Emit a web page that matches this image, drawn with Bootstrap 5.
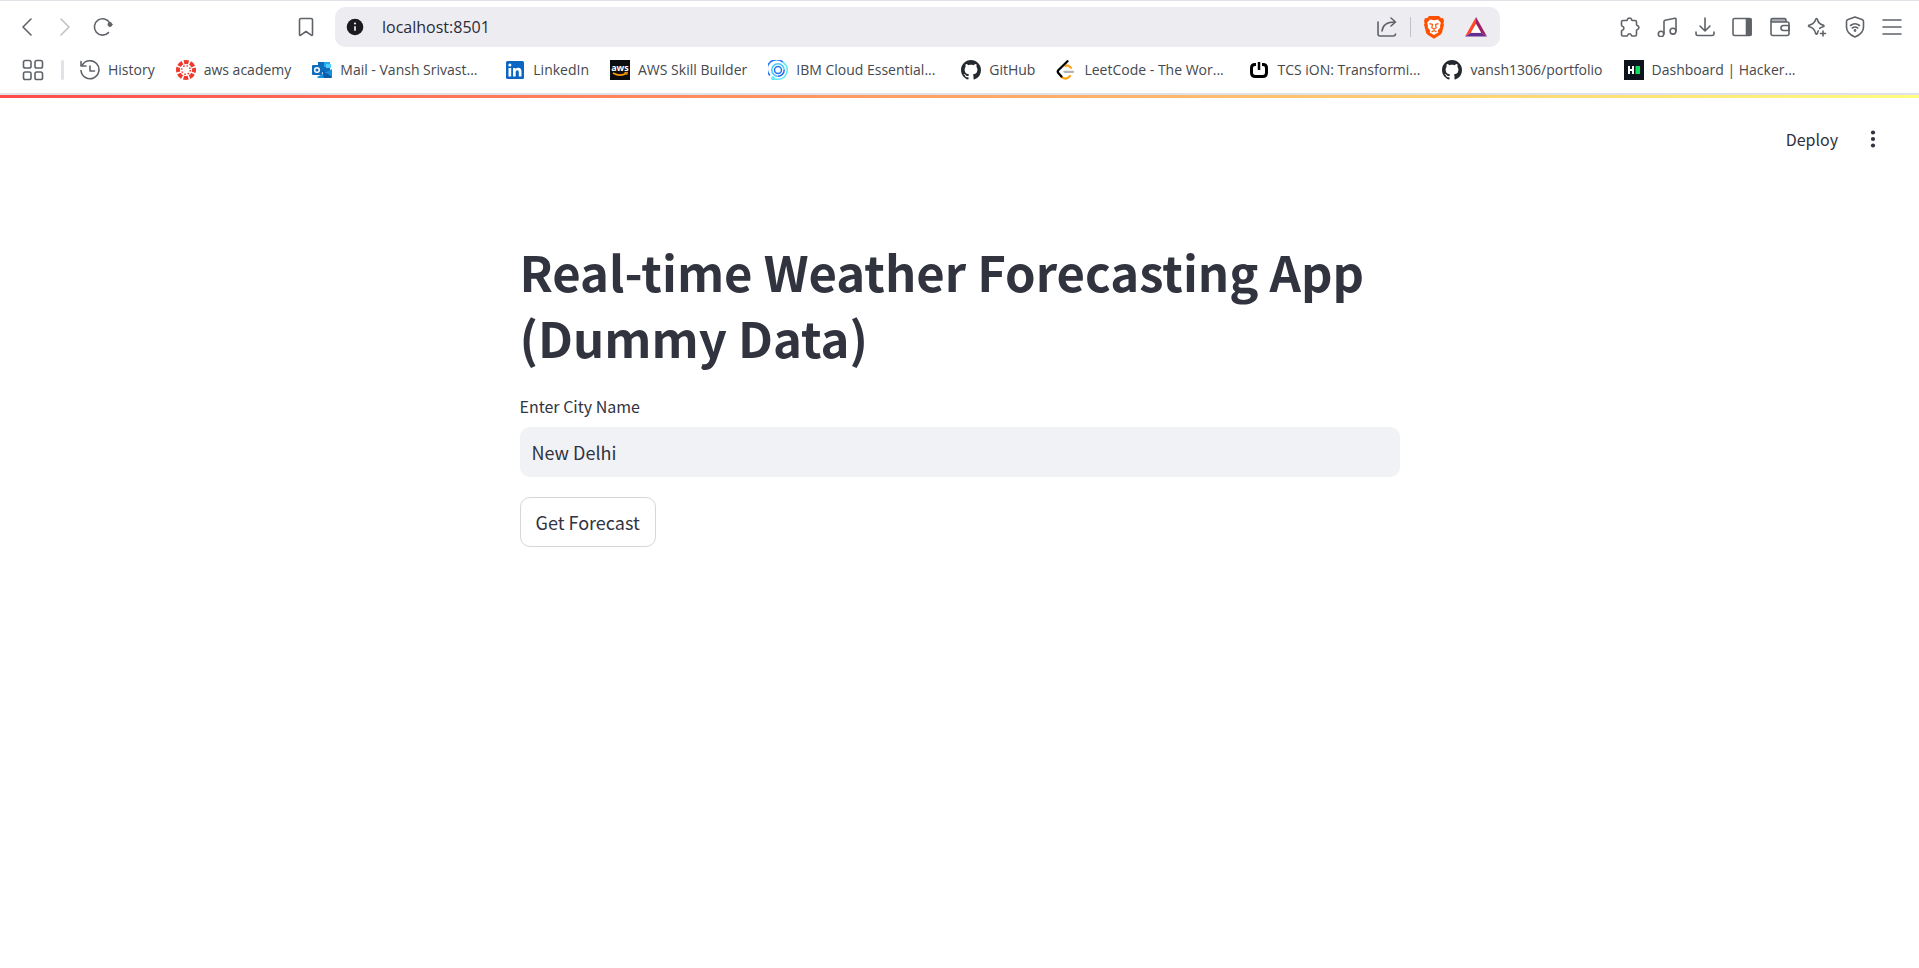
<!DOCTYPE html>
<html lang="en">
<head>
<meta charset="utf-8">
<meta name="viewport" content="width=device-width, initial-scale=1">
<title>Real-time Weather Forecasting App</title>
<link href="https://cdn.jsdelivr.net/npm/bootstrap@5.3.0/dist/css/bootstrap.min.css" rel="stylesheet">
<style>
  body { background: #fff; color: #31333f; font-family: "Noto Sans CJK SC", sans-serif; }
  svg { display: block; flex: none; }

  /* Browser chrome */
  .chrome { border-top: 1px solid #e1e1e8; border-bottom: 2px solid #e1e1e8; font-family: "Open Sans", sans-serif; color: #3b3e42; }
  .tool-row { height: 50px; padding-top: 1px; }
  .tool-left { width: 335px; padding-left: 8px; padding-right: 10px; }
  .tool-right { width: 419px; padding-right: 8px; }
  .tool-grid { display: grid; grid-template-columns: repeat(8, 1fr); width: 300px; }
  .icon-btn { width: 38px; height: 38px; padding: 0; border: 0; color: #5f6368; display: flex; align-items: center; justify-content: center; }
  .tool-grid .icon-btn { width: 100%; }
  .line-icon { fill: none; stroke: currentColor; stroke-width: 1.6; stroke-linecap: round; stroke-linejoin: round; }
  .address { height: 40px; background: #edecf1; border-radius: 10px; padding-left: 11px; padding-right: 5px; }
  .address input { border: 0; outline: 0; background: transparent; color: #2a2b38; font-size: 16px; padding: 0 0 0 18px; }
  .address-rule { width: 1px; height: 20px; background: #bfc3c9; }
  .mark-row { height: 42px; padding-left: 22px; padding-bottom: 4px; font-size: 14px; line-height: 20px; gap: 21px; }
  .mark-row a { color: #45484d; text-decoration: none; display: flex; align-items: center; gap: 8px; white-space: nowrap; }
  .mark-cut { width: 144px; }
  .mark-rule { width: 3px; height: 20px; border-radius: 2px; background: #e1e1e8; margin: 0 -5px 0 -4px; }

  /* Streamlit page */
  .decoration { height: 3px; background: linear-gradient(90deg, #ff4b4b, #fffd80); }
  .app-header { height: 82px; padding-right: 27px; gap: 16px; }
  .app-header button { color: #31333f; font-size: 16px; line-height: 24px; padding: 0; border: 0; }
  .app-body { max-width: 880px; padding-top: 58px; }
  .app-title { font-size: 49px; line-height: 66px; font-weight: 700; margin: 0 0 24px; color: #31333f; }
  .field-label { font-size: 16px; line-height: 24px; margin-bottom: 9px; }
  .city-input, .city-input:focus { height: 50px; background: #f0f2f6; border: 0; border-radius: 10px; padding: 0 12px; font-size: 18px; color: #31333f; }
  .forecast-btn { height: 50px; border: 1px solid #d6d6d9; border-radius: 10px; padding: 0 15px; font-size: 18px; color: #31333f; background: #fff; margin-top: 20px; }
</style>
</head>
<body>
<svg width="0" height="0" class="position-absolute" aria-hidden="true">
  <symbol id="octocat" viewBox="0 0 16 16"><path fill="#24292f" d="M8 0C3.58 0 0 3.58 0 8c0 3.54 2.29 6.53 5.47 7.59.4.07.55-.17.55-.38 0-.19-.01-.82-.01-1.49-2.01.37-2.53-.49-2.69-.94-.09-.23-.48-.94-.82-1.13-.28-.15-.68-.52-.01-.53.63-.01 1.08.58 1.23.82.72 1.21 1.87.87 2.33.66.07-.52.28-.87.51-1.07-1.78-.2-3.64-.89-3.64-3.95 0-.87.31-1.59.82-2.15-.08-.2-.36-1.02.08-2.12 0 0 .67-.21 2.2.82.64-.18 1.32-.27 2-.27s1.36.09 2 .27c1.53-1.04 2.2-.82 2.2-.82.44 1.1.16 1.92.08 2.12.51.56.82 1.27.82 2.15 0 3.07-1.87 3.75-3.65 3.95.29.25.54.73.54 1.48 0 1.07-.01 1.93-.01 2.2 0 .21.15.46.55.38A8.01 8.01 0 0 0 16 8c0-4.42-3.58-8-8-8z"/></symbol>
</svg>

<header class="chrome">
  <div class="tool-row d-flex align-items-center">
    <div class="tool-left d-flex align-items-center">
      <button class="btn icon-btn" aria-label="Back"><svg width="20" height="20" viewBox="0 0 20 20" class="line-icon"><path d="M14 2 6 10l8 8"/></svg></button>
      <button class="btn icon-btn" aria-label="Forward"><svg width="20" height="20" viewBox="0 0 20 20" class="line-icon" stroke-opacity=".4"><path d="m6 2 8 8-8 8"/></svg></button>
      <button class="btn icon-btn" aria-label="Reload"><svg width="20" height="20" viewBox="0 0 20 20" class="line-icon"><path d="M15.500 15.600A8.200 8.200 0 1 1 16.800 6"/><circle cx="17" cy="7.500" r="2" fill="currentColor" stroke-width="1"/></svg></button>
      <button class="btn icon-btn ms-auto" aria-label="Bookmark this page"><svg width="20" height="20" viewBox="0 0 20 20" class="line-icon"><path d="M5 1.500h10a1.500 1.500 0 0 1 1.500 1.500v14.500q0 1.500-1.200.6L10 14.500l-5.300 3.600q-1.200.9-1.200-.6V3A1.500 1.500 0 0 1 5 1.500Z"/></svg></button>
    </div>
    <div class="address d-flex align-items-center flex-grow-1">
      <svg width="18" height="18" viewBox="0 0 18 18"><circle cx="9" cy="9" r="8.300" fill="#1b1b1f"/><path d="M9 8.300v4.500" stroke="#edecf1" stroke-width="1.700"/><circle cx="9" cy="5.500" r="1.100" fill="#edecf1"/></svg>
      <input type="text" class="flex-grow-1" value="localhost:8501" aria-label="Address">
      <button class="btn icon-btn" aria-label="Share"><svg width="22" height="22" viewBox="0 0 22 22" class="line-icon"><path d="M2 6v12q0 2 2 2h13q2.500 0 2.500-2M6 15q1-9 13-9M15 2l4.500 4-4.500 4"/></svg></button>
      <span class="address-rule mx-1"></span>
      <button class="btn icon-btn" aria-label="Brave Shields"><svg width="22" height="24" viewBox="0 0 22 24"><path fill="#ff5000" d="M6 1h10l2 2.200 2-.2 1 3-.6 2.500.6 1-2 8q-.5 1.500-1.700 2.300L11 23.700l-6.300-3.900Q3.500 19 3 17.500L1 9.500l.6-1L1 6l1-3 2 .2z"/><path fill="#fff" d="m7 4.500 4 .8 4-.8 2.800 3.300-.8 3.200.3 1.500-2.600 3 .6 2L11 20l-4.300-2.500.6-2-2.600-3L5 11l-.8-3.200z"/><path fill="none" stroke="#ff5000" stroke-width="1.100" d="m6.500 8.600 3 .8-.7 3.400 2.200 1.400 2.200-1.400-.7-3.400 3-.8M11 14v2M8.500 17l2.500-1.500 2.500 1.500"/></svg></button>
      <button class="btn icon-btn ms-1" aria-label="Brave Rewards"><svg width="22" height="22" viewBox="0 0 22 22"><path fill="#ff4724" d="M11 1 0 20.500l6-3.800L11 8z"/><path fill="#9e1f63" d="m11 1 11 19.500-6-3.800L11 8z"/><path fill="#662d91" d="M0 20.500h22l-6-3.800H6z"/><path fill="#fff" d="m11 8-5 8.700h10z"/></svg></button>
    </div>
    <div class="tool-right d-flex justify-content-end">
      <div class="tool-grid">
        <button class="btn icon-btn" aria-label="Extensions"><svg width="20" height="20" viewBox="0 0 20 20" class="line-icon"><path d="M3 3.500h3.500c.6 0 .8-.4.900-1 .5-2 3.700-2 4.200 0 .1.600.4 1 .9 1H15a1.500 1.500 0 0 1 1.500 1.500v2.500c0 .6.3.9.9 1.100 2 .5 2 3.300 0 3.900-.6.200-.9.500-.9 1.100v3.900A1.500 1.500 0 0 1 15 19h-2.800c-.5 0-.8-.4-.9-.9-.5-1.800-3.100-1.800-3.600 0-.1.500-.4.900-.9.900H3a1.500 1.500 0 0 1-1.500-1.500v-3.300c0-.6.3-.8.900-1 2-.6 2-3.400 0-4-.6-.2-.9-.4-.9-1V5A1.500 1.500 0 0 1 3 3.500Z"/></svg></button>
        <button class="btn icon-btn" aria-label="Playlist"><svg width="20" height="20" viewBox="0 0 20 20" class="line-icon"><path d="M7 17V4.500q0-1 1-1.200l10-2q1-.2 1 .8V14"/><circle cx="4" cy="17" r="2.700"/><circle cx="16" cy="14.200" r="2.900"/></svg></button>
        <button class="btn icon-btn" aria-label="Downloads"><svg width="20" height="20" viewBox="0 0 20 20" class="line-icon"><path d="M10 1v13m-5-5 5 5 5-5M1 15v1.500Q1 18.500 3 18.500h14q2 0 2-2V15"/></svg></button>
        <button class="btn icon-btn" aria-label="Sidebar"><svg width="20" height="20" viewBox="0 0 20 20" class="line-icon"><rect x="1" y="1.500" width="18" height="17" rx="1.500"/><path fill="currentColor" d="M14.500 2H19v16h-4.500z"/></svg></button>
        <button class="btn icon-btn" aria-label="Wallet"><svg width="20" height="20" viewBox="0 0 20 20" class="line-icon"><path fill="#adb0b5" stroke="none" d="M2 2h13.500v3H2z"/><path d="M16 5V3q0-1.500-1.500-1.500h-12Q1 1.500 1 3v13.500Q1 18.500 3 18.500h14q2 0 2-2v-10Q19 5 17.500 5H3Q1 5 1 3.500"/><path d="M19 8.500h-5.500q-2.500 0-2.500 2.500t2.500 2.500H19z"/></svg></button>
        <button class="btn icon-btn" aria-label="Leo AI"><svg width="20" height="20" viewBox="0 0 20 20" class="line-icon"><path d="M9.500 1.500q.7 0 .9 1 1 4.500 5.600 5.600 2 .9 0 1.700-2 .5-3.300 1.600M1.500 8.900q0-.6 1-.8 5-1.400 6.100-5.600.2-1 .9-1M1.500 8.900q0 .6 1 .9 4.900 1.200 6.100 6.500.9 2 1.800 0 .3-1.400.9-2.400"/><path d="M16 14v5m-2.500-2.500h5"/></svg></button>
        <button class="btn icon-btn" aria-label="VPN"><svg width="20" height="22" viewBox="0 0 20 22" class="line-icon"><path d="m10 1 7 2.500q1.500.5 1.500 2V11q0 6.500-8.500 10Q1.500 17.500 1.500 11V5.500q0-1.500 1.500-2z"/><path d="M5.500 9.500q4.500-3.500 9 0M7.300 12q2.700-2 5.400 0"/><circle cx="10" cy="14.500" r=".6"/></svg></button>
        <button class="btn icon-btn" aria-label="Menu"><svg width="20" height="20" viewBox="0 0 20 20" class="line-icon"><path d="M1 3h18M1 10h18M1 17h18"/></svg></button>
      </div>
    </div>
  </div>

  <nav class="mark-row d-flex align-items-center" aria-label="Bookmarks">
    <a href="#" aria-label="All bookmarks"><svg width="22" height="22" viewBox="0 0 22 22" class="line-icon" color="#5f6368"><rect x="1.500" y="1.500" width="7.500" height="7.500" rx="1.800"/><rect x="13" y="1.500" width="7.500" height="7.500" rx="1.800"/><rect x="1.500" y="13" width="7.500" height="7.500" rx="1.800"/><rect x="13" y="13" width="7.500" height="7.500" rx="1.800"/></svg></a>
    <span class="mark-rule"></span>
    <a href="#"><svg width="20" height="20" viewBox="0 0 20 20" class="line-icon" color="#5f6368"><path d="M1 1.500V6h5M2 5.500A9 9 0 1 1 1 10.500M10 6v5h4.500"/></svg><span>History</span></a>
    <a href="#"><svg width="20" height="20" viewBox="0 0 20 20"><circle cx="10" cy="10" r="8" fill="none" stroke="#ee3a2c" stroke-width="4" stroke-dasharray="4.700 1.583" stroke-dashoffset="2.300"/><circle cx="10" cy="10" r="4.300" fill="none" stroke="#ee3a2c" stroke-width="1.500" stroke-dasharray="1.500 1.877"/></svg><span>aws academy</span></a>
    <a href="#"><svg width="20" height="20" viewBox="0 0 20 20"><path fill="#0f6cbd" d="M6 2h12v10H6z"/><path fill="#28a8ea" d="M12 2h6v5h-6z"/><path fill="#50d0ff" d="M14 4h5v4h-5z"/><path fill="#1490df" d="m5 17 15-8v7.500q0 1.500-1.500 1.500H6z"/><path fill="#0a5aa5" d="m10 10 10 7-1 1h-7z"/><rect y="5" width="10" height="10" rx="1" fill="#0f6cbd"/><circle cx="5" cy="10" r="2.300" fill="none" stroke="#fff" stroke-width="1.500"/></svg><span class="mark-cut">Mail - Vansh Srivast...</span></a>
    <a href="#"><svg width="20" height="20" viewBox="0 0 20 20"><rect x="1" y="1" width="18" height="18" rx="1.500" fill="#0a66c2"/><path fill="#fff" d="M3.500 8h2.700v8.500H3.500zM8 8h2.600v1.200Q11.400 7.800 13.300 7.800q3.200 0 3.200 3.900v4.800h-2.700v-4.300q0-2-1.500-2-1.600 0-1.600 2v4.300H8z"/><circle cx="4.850" cy="5" r="1.500" fill="#fff"/></svg><span>LinkedIn</span></a>
    <a href="#"><svg width="20" height="20" viewBox="0 0 20 20"><path fill="#0b0c10" d="M0 0h20v20H0z"/><text x="10" y="11" text-anchor="middle" font-family="Open Sans, sans-serif" font-weight="700" font-size="9" fill="#fff">aws</text><path d="M3 13q7 4 13.500.3" fill="none" stroke="#f90" stroke-width="1.600"/><path d="m14.500 12.500 3-.2-.8 2.700" fill="none" stroke="#f90"/></svg><span>AWS Skill Builder</span></a>
    <a href="#"><svg width="20" height="20" viewBox="0 0 20 20" fill="none" stroke-width="1.500"><path stroke="#2d7bf6" d="M2 15.500A9.200 9.200 0 0 1 15 2.300"/><path stroke="#5ee9f5" d="M15 2.300A9.200 9.200 0 0 1 10 19.200H5.500"/><path stroke="#4cc8fa" d="M10 16.200A6.200 6.200 0 1 1 16.200 10"/><path stroke="#2d6bf6" d="M16.200 10A6.200 6.200 0 0 1 10 16.200"/><circle cx="10" cy="10" r="3.500" stroke="#2673f0"/><circle cx="5" cy="18.300" r="1.200" stroke="#5ee9f5"/></svg><span class="mark-cut">IBM Cloud Essential...</span></a>
    <a href="#"><svg width="20" height="20"><use href="#octocat"/></svg><span>GitHub</span></a>
    <a href="#"><svg width="20" height="20" viewBox="0 0 20 20" fill="none" stroke-width="2.300" stroke-linecap="round"><path stroke="#b3b3b3" d="M8.500 11.800H17"/><path stroke="#ffa116" d="m9.500 6 1.500-.7q1.500 0 4 2.500M5 16.500q4.500 4.500 9-.5"/><path stroke="#000" d="M11.500 1.200 2.500 10q-1.500 1.500 0 3.200L5.500 16.500"/></svg><span class="mark-cut">LeetCode - The Wor...</span></a>
    <a href="#"><svg width="20" height="20" viewBox="0 0 20 20" fill="none" stroke="#000" stroke-width="3"><path d="M7 4.500H6Q2.500 4.500 2.500 8v4.500Q2.500 16.500 6.500 16.500h7q4 0 4-4V8q0-3.500-3.500-3.500h-1"/><path d="M10 2v8" stroke-width="2.500"/></svg><span class="mark-cut">TCS iON: Transformi...</span></a>
    <a href="#"><svg width="20" height="20"><use href="#octocat"/></svg><span>vansh1306/portfolio</span></a>
    <a href="#"><svg width="20" height="20" viewBox="0 0 20 20"><path fill="#0e141e" d="M0 0h20v20H0z"/><path stroke="#fff" stroke-width="2" d="M5 6v8M9 6v8M5 10h4"/><path fill="#05e35e" d="M11.500 6H16v8h-4.500z"/></svg><span class="mark-cut">Dashboard | Hacker...</span></a>
  </nav>
</header>

<div class="decoration"></div>
<div class="app-header d-flex align-items-center justify-content-end">
  <button class="btn">Deploy</button>
  <button class="btn icon-btn" aria-label="Main menu"><svg width="20" height="20" viewBox="0 0 20 20" fill="currentColor"><circle cx="10" cy="3.500" r="2.100"/><circle cx="10" cy="10" r="2.100"/><circle cx="10" cy="16.500" r="2.100"/></svg></button>
</div>

<main class="app-body mx-auto">
  <h1 class="app-title">Real-time Weather Forecasting App (Dummy Data)</h1>
  <label for="city" class="field-label d-block">Enter City Name</label>
  <input id="city" type="text" class="form-control city-input" value="New Delhi">
  <button class="btn forecast-btn">Get Forecast</button>
</main>
<script src="https://cdn.jsdelivr.net/npm/bootstrap@5.3.0/dist/js/bootstrap.bundle.min.js"></script>
</body>
</html>
